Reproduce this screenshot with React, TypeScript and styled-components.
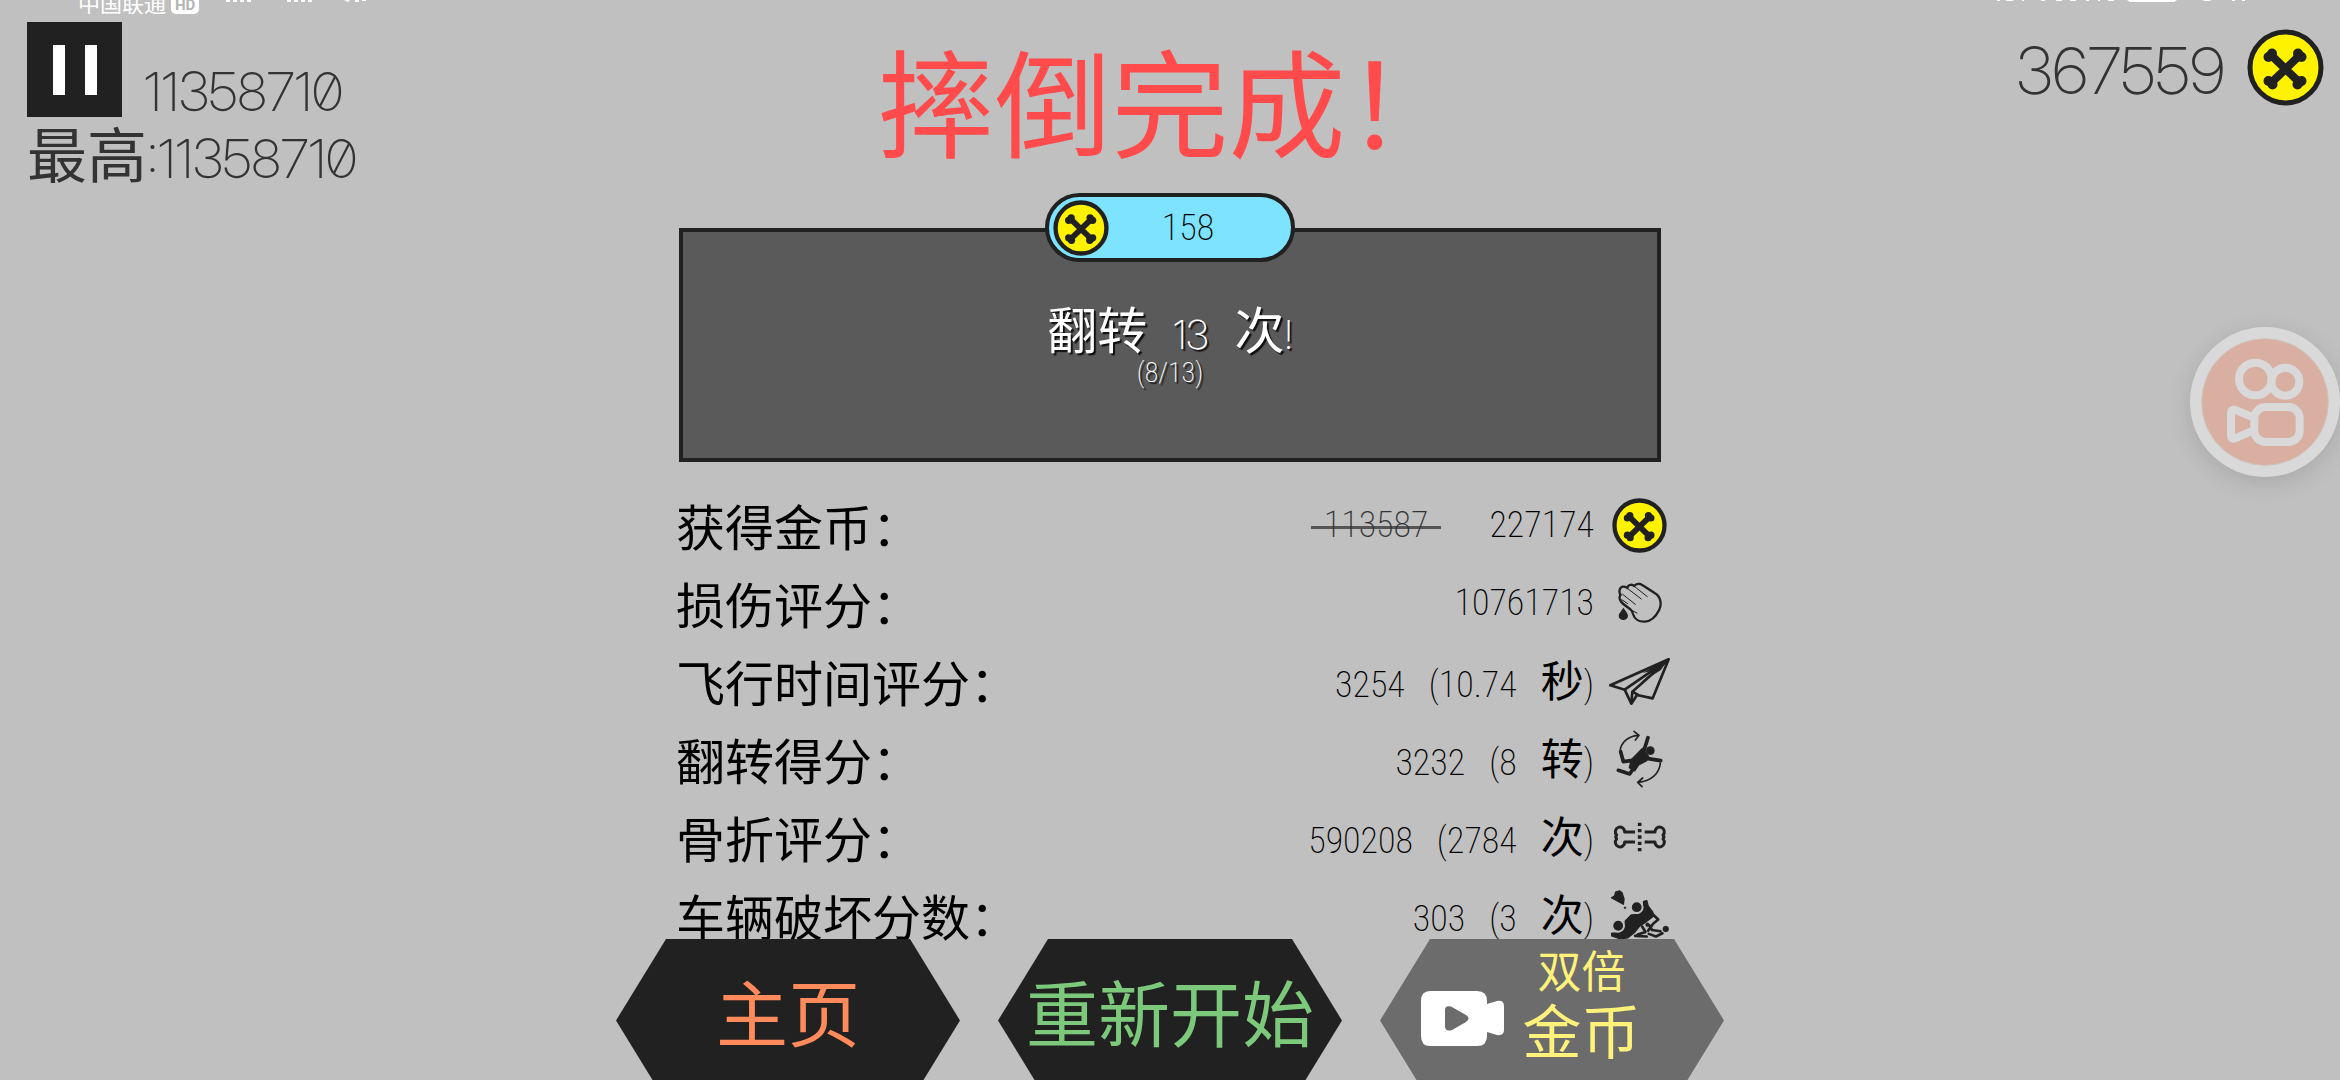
import React from 'react';
import styled, { createGlobalStyle } from 'styled-components';

const CJK = '"Noto Sans CJK SC", sans-serif';
const THIN = `"Inter Display", Inter, ${CJK}`;
const NARROW = `"Roboto Condensed", Roboto, ${CJK}`;
const INK = '#212121';

const Global = createGlobalStyle`
  * { box-sizing: border-box; }
  body { margin: 0; background: #c0c0c0; font-family: ${CJK}; }
  button { border: 0; padding: 0; font-family: inherit; cursor: pointer; }
  svg { display: block; }
`;

const Page = styled.div`
  height: 100vh;
  overflow: hidden;
  display: flex;
  flex-direction: column;
`;

const StatusBar = styled.header`
  height: 14px;
  flex: none;
  overflow: hidden;
  display: flex;
  justify-content: space-between;
  padding: 0 90px 0 78px;
  color: #fff;
`;

const StatusGroup = styled.div<{ $bottom?: boolean }>`
  display: flex;
  align-items: ${p => (p.$bottom ? 'flex-end' : 'flex-start')};
  gap: 5px;
`;

const Carrier = styled.span`
  font-size: 22px;
  line-height: 24px;
`;

const HdBadge = styled.span`
  background: #fff;
  color: #b4b4b4;
  border-radius: 5px;
  padding: 0 4px;
  font: 700 15px/18px Roboto, sans-serif;
`;

const SignalMarks = styled.svg`
  align-self: flex-start;
  margin-left: 22px;
`;

const Game = styled.div`
  flex: 1;
  display: grid;
  grid-template-columns: 1fr 1000px 1fr;
`;

const Hud = styled.section`
  padding: 8px 0 0 27px;
  color: #333;
`;

const HudRow = styled.div`
  display: flex;
  align-items: flex-end;
  gap: 22px;
`;

const PauseButton = styled.button`
  width: 95px;
  height: 95px;
  background: ${INK};
  display: flex;
  align-items: center;
  justify-content: center;
  gap: 20px;
`;

const PauseBar = styled.span`
  width: 12px;
  height: 50px;
  background: #fff;
`;

const Score = styled.span`
  font: 200 54px/50px ${THIN};
  font-feature-settings: "zero";
`;

const Best = styled.div`
  display: flex;
  align-items: baseline;
  font-size: 60px;
  line-height: 70px;
`;

const Wallet = styled.section`
  display: flex;
  justify-content: flex-end;
  align-items: flex-start;
  gap: 22px;
  padding: 15px 16px 0 0;
  color: #333;
`;

const Balance = styled.span`
  font: 200 65px/84px ${THIN};
`;

const Center = styled.main`
  display: flex;
  flex-direction: column;
  align-items: center;
`;

const Title = styled.h1`
  margin: 24px 0 70px;
  font-size: 117px;
  line-height: 120px;
  font-weight: 400;
  color: #ff4b4b;
  white-space: nowrap;
`;

const Card = styled.section`
  width: 982px;
  min-height: 234px;
  background: #5a5a5a;
  border: 4px solid ${INK};
  display: flex;
  flex-direction: column;
  align-items: center;
  color: #fff;
  text-shadow: 2px 2px 1px #111;
`;

const RewardPill = styled.div`
  width: 250px;
  height: 69px;
  margin-top: -39px;
  border: 4px solid ${INK};
  border-radius: 35px;
  background: #7de3ff;
  color: #000;
  text-shadow: none;
  display: flex;
  align-items: center;
  padding-left: 4px;
`;

const Reward = styled.span`
  flex: 1;
  padding-right: 24px;
  text-align: center;
  font: 200 36px/60px ${NARROW};
`;

const Quest = styled.p`
  margin: 35px 0 0;
  height: 60px;
  display: flex;
  align-items: baseline;
  gap: 26px;
  font-size: 50px;
  line-height: 60px;
`;

const Thin = styled.span`
  font: 200 40px/40px ${THIN};
`;

const Progress = styled.p`
  margin: 0;
  font: 200 28px/32px ${NARROW};
`;

const Results = styled.table`
  width: 100%;
  margin-top: 24px;
  border-collapse: collapse;
  color: #000;
`;

const Row = styled.tr`
  height: 78px;
`;

const Label = styled.th`
  padding: 0 0 0 6px;
  text-align: left;
  font-weight: 400;
  font-size: 49px;
  line-height: 72px;
  white-space: nowrap;
`;

const Value = styled.td`
  padding: 0 15px 0 0;
  font: 200 36px/60px ${NARROW};
`;

const ValueLine = styled.div<{ $gap: number }>`
  display: flex;
  justify-content: flex-end;
  align-items: baseline;
  gap: ${p => p.$gap}px;
`;

const Unit = styled.span`
  font: 400 43px/60px ${CJK};
`;

const Old = styled.s`
  padding: 0 13px;
  text-decoration: none;
  color: #333;
  background: linear-gradient(#555, #555) center 31px / 100% 3px no-repeat;
`;

const IconCell = styled.td`
  width: 58px;
  padding: 0;
`;

const IconBox = styled.div`
  display: flex;
  justify-content: center;
`;

const Actions = styled.nav`
  position: relative;
  margin-top: -15px;
  display: flex;
  gap: 38px;
`;

const HexButton = styled.button<{ $bg: string; $fg: string; $reward?: boolean }>`
  width: 344px;
  height: 163px;
  display: flex;
  align-items: center;
  justify-content: center;
  gap: 18px;
  background: ${p => p.$bg};
  color: ${p => p.$fg};
  font-size: 72px;
  line-height: 80px;
  padding: ${p => (p.$reward ? '0 42px 4px 0' : '0 0 22px')};
  clip-path: polygon(50px 0, 294px 0, 100% 50%, 294px 100%, 50px 100%, 0 50%);
`;

const Stack = styled.span`
  display: flex;
  flex-direction: column;
  align-items: center;
  font-size: 59px;
  line-height: 66px;
  padding-bottom: 34px;
`;

const Small = styled.span`
  font-size: 44px;
  line-height: 54px;
`;

const RecordButton = styled.button`
  position: fixed;
  top: 327px;
  right: 0;
  width: 150px;
  height: 150px;
  border-radius: 50%;
  background: #d9d9d9;
  box-shadow: 0 6px 24px rgba(0, 0, 0, 0.12);
`;

const Coin = ({ size, ring = 5 }: { size: number; ring?: number }) => (
  <svg width={size} height={size} viewBox="0 0 77 77" aria-hidden="true">
    <circle cx="38.5" cy="38.5" r={38 - ring / 2} fill="#fff200" stroke={INK} strokeWidth={ring} />
    <g stroke={INK} strokeWidth="8" strokeLinecap="round">
      <path d="M24 26 53 54M53 26 24 54" />
    </g>
    <g fill={INK}>
      <circle cx="25" cy="24.500" r="5" /><circle cx="21.500" cy="28" r="5" />
      <circle cx="51" cy="24.500" r="5" /><circle cx="54.500" cy="28" r="5" />
      <circle cx="21.500" cy="52" r="5" /><circle cx="25.500" cy="55.500" r="5" />
      <circle cx="54.500" cy="52" r="5" /><circle cx="50.500" cy="55.500" r="5" />
    </g>
  </svg>
);

const HandIcon = () => (
  <svg width="44" height="42" viewBox="1015 315 132 126" fill="none" stroke={INK} strokeLinecap="round" strokeLinejoin="round">
    <path strokeWidth="7" d="M1053 398C1044 390 1030 383 1023 372C1018 364 1020 357 1023 354C1017 346 1018 331 1030 329C1036 328 1040 331 1043 333C1044 324 1056 320 1064 327C1069 318 1081 319 1089 325L1126 349C1144 360 1147 382 1138 400C1127 422 1113 433 1096 434C1078 435 1064 426 1060 411C1059 405 1058 402 1053 398Z" />
    <path strokeWidth="3" d="M1029 352 1067 382M1043 334 1085 366M1064 328 1103 359M1056 400 1072 408M1026 368 1044 380" />
    <path fill={INK} stroke="none" d="M1031 392C1039 403 1045 410 1045 416A14 13 0 0 1 1017 416C1017 409 1025 402 1031 392Z" />
  </svg>
);

const PlaneIcon = () => (
  <svg width="61" height="49" viewBox="990 530 183 147" fill="none" stroke={INK} strokeWidth="8" strokeLinejoin="round">
    <path d="M1169 537 994 615 1037 628 1057 670 1074 644 1121 654Z" />
    <path d="M1168 538 1037 628M1168 538 1060 634 1057 668M1060 634 1080 645" />
    <path fill={INK} stroke="none" d="M1170 534 1090 578 1128 570 1086 606 1145 570Z" />
  </svg>
);

const FlipIcon = () => (
  <svg width="47" height="58" viewBox="1012 67 141 174" fill="none" stroke={INK} strokeLinecap="round" strokeLinejoin="round">
    <path strokeWidth="5" d="M1024 132C1026 104 1048 86 1078 83M1066 71 1081 83 1070 97M1145 166C1142 198 1118 220 1080 224M1092 211 1077 224 1090 237" />
    <path strokeWidth="11" d="M1026 132 1034 162 1062 158M1108 90 1096 128M1104 152 1146 159M1019 188 1053 199 1070 174" />
    <path fill={INK} strokeWidth="4" d="M1092 122 1110 147 1104 159 1080 172 1068 190 1052 180 1058 156Z" />
    <circle cx="1115" cy="129" r="13" fill={INK} stroke="none" />
  </svg>
);

const BoneIcon = () => (
  <svg width="54" height="30" viewBox="1001 343 162 90" fill="none" stroke={INK} strokeWidth="9" strokeLinejoin="round">
    <path d="M1067 373H1036A14 14 0 1 0 1012 382L1009 388 1012 394A14 14 0 1 0 1036 403H1067" />
    <path d="M1096 373H1127A14 14 0 1 1 1151 382L1154 388 1151 394A14 14 0 1 1 1127 403H1096" />
    <path strokeWidth="11" strokeDasharray="10 9" d="M1081 345V433" />
  </svg>
);

const CrashIcon = () => (
  <svg width="58" height="50" viewBox="992 529 178 150" fill={INK} stroke={INK} strokeLinejoin="round" strokeLinecap="round">
    <path strokeWidth="4" d="M1006 534 1018 530 1026 536 1032 555 1030 571 1014 562 993 551 1003 546Z" />
    <circle cx="1035" cy="582" r="3" />
    <path strokeWidth="4" d="M1092 562 1102 560 1106 576 1120 595 1123 607 1096 628 1078 640 1064 658 1044 674 1020 677 994 668 994 660 1018 660 1034 648 1036 622 1054 604 1078 602 1092 588Z" />
    <circle cx="1071" cy="580" r="18" stroke="#c0c0c0" strokeWidth="6" />
    <circle cx="1014" cy="637" r="18" stroke="#c0c0c0" strokeWidth="6" />
    <path fill="none" strokeWidth="8" d="M1108 590 1137 618 1122 630 1106 652M1074 664 1098 656 1088 640M1066 668 1102 670M1110 636 1118 650 1144 654M1108 662 1130 670 1150 660" />
    <circle cx="1160" cy="647" r="9" />
    <circle cx="1104" cy="634" r="6" />
  </svg>
);

const VideoIcon = () => (
  <svg width="83" height="55" viewBox="0 0 83 55" aria-hidden="true">
    <path fill="#fff" d="M9 0H56Q66 0 66 10V13L76 10Q83 9 83 15V39Q83 45 76 44L66 41V45Q66 55 56 55H9Q0 55 0 45V10Q0 0 9 0Z" />
    <path fill="#6c6c6c" d="M24 19Q24 14 30 15.500L45 24Q50 27 45 31L31 39Q24 41 24 35Z" />
  </svg>
);

const CameraLogo = () => (
  <svg width="150" height="150" viewBox="90 81 450 450" aria-hidden="true">
    <circle cx="315" cy="306" r="190" fill="#d9afa1" stroke="#cfc4bf" strokeWidth="3" />
    <g fill="none" stroke="#d9d9d9" strokeWidth="24" strokeLinejoin="round">
      <circle cx="286" cy="237" r="49" />
      <circle cx="376" cy="245" r="42" />
      <rect x="283" y="321" width="136" height="105" rx="34" />
      <path d="M280 352 229 331Q213 325 213 341V406Q213 421 228 414L280 391" />
    </g>
  </svg>
);

type Result = { label: string; value: string; old?: string; count?: string; unit?: string; icon: React.ReactNode };

const results: Result[] = [
  { label: '获得金币：', old: '113587', value: '227174', icon: <Coin size={55} ring={6} /> },
  { label: '损伤评分：', value: '10761713', icon: <HandIcon /> },
  { label: '飞行时间评分：', value: '3254', count: '10.74', unit: '秒', icon: <PlaneIcon /> },
  { label: '翻转得分：', value: '3232', count: '8', unit: '转', icon: <FlipIcon /> },
  { label: '骨折评分：', value: '590208', count: '2784', unit: '次', icon: <BoneIcon /> },
  { label: '车辆破坏分数：', value: '303', count: '3', unit: '次', icon: <CrashIcon /> },
];

export default function App() {
  return (
    <Page>
      <Global />
      <StatusBar>
        <StatusGroup $bottom>
          <Carrier>中国联通</Carrier>
          <HdBadge>HD</HdBadge>
          <SignalMarks width="142" height="3" viewBox="0 0 142 3" fill="#fff">
            <path d="M0 0h4v2H0zM7 0h4v2H7zM14 0h4v2h-4zM21 0h4v2h-4zM61 0h4v2h-4zM68 0h4v2h-4zM75 0h4v2h-4zM82 0h4v2h-4zM118 0h6l-2 2zM129 0h4v2h-4zM136 0h4v1h-4z" />
          </SignalMarks>
        </StatusGroup>
        <StatusGroup>
          <svg width="256" height="3" viewBox="0 0 256 3" fill="#fff" aria-hidden="true">
            <path d="M3 0h3v1H3zM11 0h9l-2 1h-5zM28 0h2v1h-2zM47 0h4v1h-4zM62 0h6v1h-6zM76 0h6v1h-6zM92 0h3v1h-3zM104 0h2v1h-2zM114 0h6v1h-6zM133 0h50l-3 2h-44zM208 0h10l-3 1h-4zM238 0h3v1h-3zM248 0h3v1h-3z" />
          </svg>
        </StatusGroup>
      </StatusBar>
      <Game>
        <Hud>
          <HudRow>
            <PauseButton aria-label="暂停">
              <PauseBar />
              <PauseBar />
            </PauseButton>
            <Score>11358710</Score>
          </HudRow>
          <Best>
            最高<Score>:11358710</Score>
          </Best>
        </Hud>
        <Center>
          <Title>摔倒完成！</Title>
          <Card>
            <RewardPill>
              <Coin size={56} ring={6} />
              <Reward>158</Reward>
            </RewardPill>
            <Quest>
              <span>翻转</span>
              <Thin>13</Thin>
              <span>次<Thin>!</Thin></span>
            </Quest>
            <Progress>(8/13)</Progress>
          </Card>
          <Results>
            <tbody>
              {results.map(r => (
                <Row key={r.label}>
                  <Label scope="row">{r.label}</Label>
                  <Value>
                    <ValueLine $gap={r.old ? 48 : 24}>
                      {r.old && <Old>{r.old}</Old>}
                      <span>{r.value}</span>
                      {r.count && <span>({r.count}</span>}
                      {r.unit && <span><Unit>{r.unit}</Unit>)</span>}
                    </ValueLine>
                  </Value>
                  <IconCell>
                    <IconBox>{r.icon}</IconBox>
                  </IconCell>
                </Row>
              ))}
            </tbody>
          </Results>
          <Actions>
            <HexButton $bg={INK} $fg="#ff8a5c">主页</HexButton>
            <HexButton $bg={INK} $fg="#7dc97b">重新开始</HexButton>
            <HexButton $bg="#6c6c6c" $fg="#fff27a" $reward>
              <VideoIcon />
              <Stack>
                <Small>双倍</Small>
                金币
              </Stack>
            </HexButton>
          </Actions>
        </Center>
        <Wallet>
          <Balance>367559</Balance>
          <Coin size={77} />
        </Wallet>
      </Game>
      <RecordButton aria-label="录制">
        <CameraLogo />
      </RecordButton>
    </Page>
  );
}
